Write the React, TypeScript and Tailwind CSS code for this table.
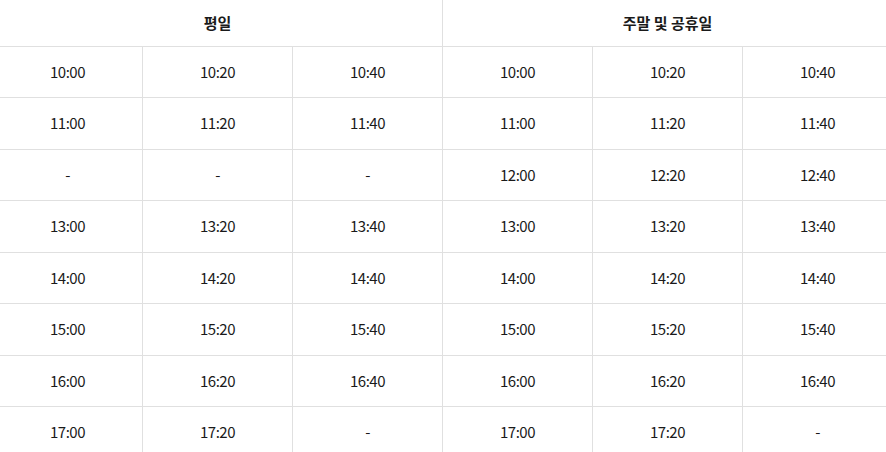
const weekday = [
  ["10:00", "10:20", "10:40"],
  ["11:00", "11:20", "11:40"],
  ["-", "-", "-"],
  ["13:00", "13:20", "13:40"],
  ["14:00", "14:20", "14:40"],
  ["15:00", "15:20", "15:40"],
  ["16:00", "16:20", "16:40"],
  ["17:00", "17:20", "-"],
];

const weekend = [
  ["10:00", "10:20", "10:40"],
  ["11:00", "11:20", "11:40"],
  ["12:00", "12:20", "12:40"],
  ["13:00", "13:20", "13:40"],
  ["14:00", "14:20", "14:40"],
  ["15:00", "15:20", "15:40"],
  ["16:00", "16:20", "16:40"],
  ["17:00", "17:20", "-"],
];

const App = () => {
  return (
    <div className="w-[886px] h-[452px] overflow-hidden bg-white">
      <table
        className="-ml-[8px] w-[901px] table-fixed border-collapse text-[15px] text-[#1a1a1a] -mt-px"
        style={{ fontFamily: '"Noto Sans CJK KR", "Noto Sans", sans-serif' }}
      >
        <thead>
          <tr className="h-[47px]">
            <th colSpan={3} className="border border-[#e0e0e0] font-bold">
              평일
            </th>
            <th colSpan={3} className="border border-[#e0e0e0] font-bold">
              주말 및 공휴일
            </th>
          </tr>
        </thead>
        <tbody>
          {weekday.map((row, i) => (
            <tr key={i} className="h-[51.45px]">
              {[...row, ...weekend[i]].map((t, j) => (
                <td
                  key={j}
                  className="border border-[#e0e0e0] text-center font-normal tracking-[-0.5px]"
                >
                  {t}
                </td>
              ))}
            </tr>
          ))}
        </tbody>
      </table>
    </div>
  );
};

export default App;
